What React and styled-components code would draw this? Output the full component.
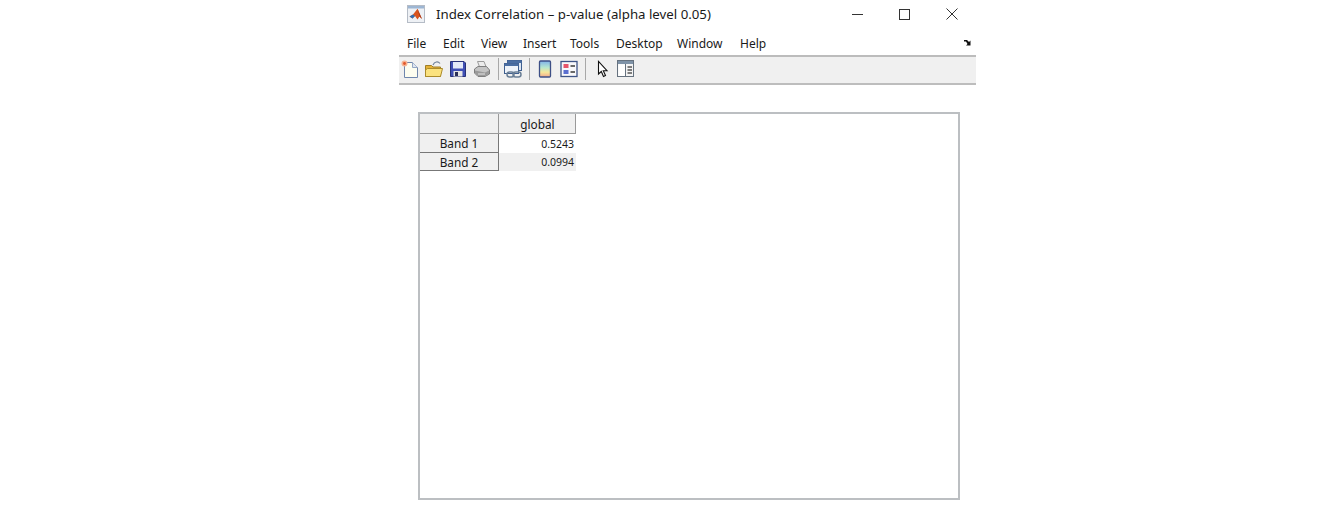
import React from 'react';
import styled, {createGlobalStyle} from 'styled-components';

const GlobalStyle = createGlobalStyle`
    html, body {
        margin: 0;
        padding: 0;
        background: #ffffff;
    }
    body {
        font-family: "Noto Sans", "Open Sans", sans-serif;
        color: #1a1a1a;
    }
`;

const Page = styled.div`
    width: 1320px;
    height: 517px;
    overflow: hidden;
    padding-left: 399px;
    box-sizing: border-box;
`;

const Win = styled.div`
    width: 577px;
`;

const TitleBar = styled.div`
    height: 28px;
    display: flex;
    align-items: center;
    padding-left: 8px;
`;

const TitleText = styled.div`
    flex: 1;
    margin-left: 11px;
    font-size: 13.25px;
    white-space: nowrap;
`;

const WinButtons = styled.div`
    display: flex;
    align-items: center;
`;

const WinButton = styled.div`
    width: 47px;
    height: 28px;
    display: flex;
    align-items: center;
    justify-content: center;
    margin-right: ${p => p.$last ? '1px' : '0'};
`;

const MenuBar = styled.div`
    height: 29px;
    display: flex;
    align-items: center;
    padding: 3px 4px 0 8px;
    border-bottom: 2px solid #bcbcbc;
    box-sizing: border-box;
    font-size: 12px;
`;

const MenuItem = styled.span`
    width: ${p => p.$w}px;
    white-space: nowrap;
`;

const ResizeArrow = styled.div`
    margin-left: auto;
    margin-top: -2px;
    display: flex;
`;

const ToolBar = styled.div`
    height: 28px;
    display: flex;
    align-items: center;
    padding-bottom: 2px;
    background: #f0f0f0;
    border-bottom: 2px solid #bdbdbd;
    box-sizing: border-box;
`;

const ToolIcon = styled.div`
    width: 22px;
    height: 24px;
    margin-right: 2px;
    display: flex;
    align-items: center;
    justify-content: center;
    flex: none;
`;

const Sep = styled.div`
    width: 1px;
    height: 22px;
    background: #a8a8a8;
    margin: 0 ${p => p.$after}px 0 3px;
`;

const Body = styled.div`
    padding: 27px 0 0 19px;
`;

const Panel = styled.div`
    width: 542px;
    height: 388px;
    border: 2px solid #bcbfc2;
    box-sizing: border-box;
`;

const Grid = styled.div`
    display: grid;
    grid-template-columns: 79px 77px;
    grid-template-rows: 20px 19px 18px;
    width: 156px;
    font-size: 11.8px;
`;

const CornerCell = styled.div`
    background: #f0f0f0;
    border-right: 1px solid #9a9a9a;
    border-bottom: 1px solid #9a9a9a;
`;

const ColHead = styled.div`
    background: #f0f0f0;
    border-right: 1px solid #9a9a9a;
    border-bottom: 1px solid #9a9a9a;
    display: flex;
    align-items: center;
    justify-content: center;
    padding: 1px 0 0 1px;
    box-sizing: border-box;
`;

const RowHead = styled.div`
    background: #f0f0f0;
    border-right: 1px solid #777777;
    border-bottom: 1px solid #777777;
    display: flex;
    align-items: center;
    justify-content: center;
    box-sizing: border-box;
`;

const DataCell = styled.div`
    background: ${p => p.$alt ? '#f0f0f0' : '#ffffff'};
    display: flex;
    align-items: center;
    justify-content: flex-end;
    padding-right: 2px;
    font-size: 10.5px;
`;

const MatlabIcon = () => (
    <svg width="18" height="18" viewBox="0 0 18 18">
        <rect x="0.5" y="0.5" width="17" height="17" fill="#eef1f5" stroke="#b5bcc6"/>
        <rect x="1" y="1" width="16" height="2.5" fill="#9db6d3"/>
        <path d="M2.5 11.5 L6 9.5 L8 7 L10.5 3.8 L15 14 L12.5 11.5 L10.5 14.5 L8 11 L5.5 13.5 Z" fill="#d9541e"/>
        <path d="M2.5 11.5 L6 9.5 L8 11 L5.5 13.5 Z" fill="#2f6fb3"/>
        <path d="M10.5 3.8 L15 14 L12.5 11.5 Z" fill="#a83a1a"/>
    </svg>
);

const NewIcon = () => (
    <svg width="18" height="19" viewBox="0 0 18 19">
        <path d="M3.5 2.5 H11.5 L16.5 7.5 V17.5 H3.5 Z" fill="#fdfdf0" stroke="#6f86ad"/>
        <path d="M11.5 2.5 V7.5 H16.5" fill="#dfe6f1" stroke="#94a7c4"/>
        <circle cx="3.5" cy="3.5" r="3" fill="#f6b391"/>
        <circle cx="3.5" cy="3.5" r="1.4" fill="#e2562a"/>
    </svg>
);

const OpenIcon = () => (
    <svg width="18" height="18" viewBox="0 0 18 18">
        <path d="M8 5 C9.5 1.5 13 1 15 3.5" fill="none" stroke="#6f8199" strokeWidth="1.2"/>
        <path d="M0.5 5.5 H6.5 L8 7 H15.5 V16.5 H0.5 Z" fill="#e4b136" stroke="#9f7e26"/>
        <path d="M0.5 16.5 V10 L2.5 8.5 H17.5 L15.5 16.5 Z" fill="#fbe27e" stroke="#ab8b2b"/>
    </svg>
);

const SaveIcon = () => (
    <svg width="18" height="18" viewBox="0 0 18 18">
        <path d="M1.5 1.5 H15 L16.5 3 V16.5 H1.5 Z" fill="#3f4fb5" stroke="#283278"/>
        <rect x="4" y="2" width="10" height="6.5" fill="#e3e9f8"/>
        <rect x="4.5" y="11" width="9" height="5.5" fill="#e5e5e5"/>
        <rect x="6" y="12" width="3" height="4" fill="#2b2f58"/>
    </svg>
);

const PrintIcon = () => (
    <svg width="18" height="18" viewBox="0 0 18 18">
        <path d="M4.5 1.5 H11 L13.5 8 H7 Z" fill="#ececec" stroke="#9a9a9a"/>
        <path d="M1.5 9 L5 6.5 H13.5 L16.5 10 V14 L12 16.5 H5 L1.5 13 Z" fill="#c4c4c4" stroke="#7e7e7e"/>
        <path d="M2 10.5 L12 12.5 L16 10.5 V14 L12 16 H5 L2 13 Z" fill="#9a9a9a"/>
        <path d="M5 14 H12" stroke="#e4e4e4"/>
    </svg>
);

const LinkIcon = () => (
    <svg width="18" height="18" viewBox="0 0 18 18">
        <rect x="3.5" y="0.5" width="14" height="10" fill="#dce6f4" stroke="#3f5f8f"/>
        <rect x="3.5" y="0.5" width="14" height="2.5" fill="#4a6ea3"/>
        <rect x="0.5" y="3.5" width="14" height="10" fill="#eef3fa" stroke="#3f5f8f"/>
        <rect x="0.5" y="3.5" width="14" height="2.5" fill="#4a6ea3"/>
        <rect x="3" y="12" width="7" height="5" rx="2.5" fill="none" stroke="#6a7f96" strokeWidth="1.5"/>
        <rect x="9" y="12" width="8" height="5" rx="2.5" fill="none" stroke="#6a7f96" strokeWidth="1.5"/>
    </svg>
);

const ColorbarIcon = () => (
    <svg width="18" height="18" viewBox="0 0 18 18">
        <defs>
            <linearGradient id="cbar" x1="0" y1="0" x2="0" y2="1">
                <stop offset="0" stopColor="#7fb2ea"/>
                <stop offset="0.4" stopColor="#b5e6cf"/>
                <stop offset="0.7" stopColor="#f7e79a"/>
                <stop offset="1" stopColor="#f2a98a"/>
            </linearGradient>
        </defs>
        <rect x="3.5" y="1" width="11" height="16" rx="1" fill="url(#cbar)" stroke="#3d4f86" strokeWidth="1.3"/>
    </svg>
);

const LegendIcon = () => (
    <svg width="18" height="18" viewBox="0 0 18 18">
        <rect x="1" y="1.5" width="16" height="15" fill="#f8f8fb" stroke="#3e5487" strokeWidth="1.3"/>
        <rect x="3.5" y="4" width="5" height="4" fill="#e8546a"/>
        <rect x="3.5" y="10" width="5" height="4" fill="#5b6fd0"/>
        <path d="M10.5 6 H15 M10.5 12 H15" stroke="#3a3a3a" strokeWidth="1.3"/>
    </svg>
);

const CursorIcon = () => (
    <svg width="18" height="18" viewBox="0 0 18 18">
        <path d="M5.5 1.5 V14 L8.3 11.5 L10.5 16.5 L12.5 15.5 L10.3 10.7 H14 Z" fill="#ffffff" stroke="#111111" strokeWidth="1.1"/>
    </svg>
);

const PaneIcon = () => (
    <svg width="18" height="18" viewBox="0 0 18 18">
        <rect x="0.5" y="0.5" width="16" height="16" fill="#f4f4f4" stroke="#66727f"/>
        <rect x="1" y="1" width="15" height="3" fill="#7f93a8"/>
        <rect x="1.5" y="4.5" width="6.5" height="11.5" fill="#ffffff"/>
        <path d="M8.5 4 V16" stroke="#66727f"/>
        <path d="M10.5 7 H15 M10.5 10 H15 M10.5 13 H15" stroke="#555555" strokeWidth="1.3"/>
    </svg>
);

const rows = [
    {name: 'Band 1', value: '0.5243'},
    {name: 'Band 2', value: '0.0994'}
];

const menus = [
    {label: 'File', w: 36},
    {label: 'Edit', w: 38},
    {label: 'View', w: 42},
    {label: 'Insert', w: 47},
    {label: 'Tools', w: 46},
    {label: 'Desktop', w: 61},
    {label: 'Window', w: 63},
    {label: 'Help', w: 30}
];

const App = () => (
    <Page>
        <GlobalStyle />
        <Win>
            <TitleBar>
                <MatlabIcon />
                <TitleText>Index Correlation – p-value (alpha level 0.05)</TitleText>
                <WinButtons>
                    <WinButton>
                        <svg width="11" height="11" viewBox="0 0 11 11"><path d="M0 5.5 H11" stroke="#333" strokeWidth="1"/></svg>
                    </WinButton>
                    <WinButton>
                        <svg width="11" height="11" viewBox="0 0 11 11"><rect x="0.5" y="0.5" width="10" height="10" fill="none" stroke="#333"/></svg>
                    </WinButton>
                    <WinButton $last>
                        <svg width="12" height="12" viewBox="0 0 12 12"><path d="M0.5 0.5 L11.5 11.5 M11.5 0.5 L0.5 11.5" stroke="#333" strokeWidth="1"/></svg>
                    </WinButton>
                </WinButtons>
            </TitleBar>
            <MenuBar>
                {menus.map(m => <MenuItem key={m.label} $w={m.w}>{m.label}</MenuItem>)}
                <ResizeArrow>
                    <svg width="8" height="7" viewBox="0 0 8 7"><path d="M0 1 H3 L5 3 L6.5 1.5 V6.5 H2 L3.5 5 L2 2.5 H0 Z" fill="#111"/></svg>
                </ResizeArrow>
            </MenuBar>
            <ToolBar>
                <ToolIcon><NewIcon /></ToolIcon>
                <ToolIcon><OpenIcon /></ToolIcon>
                <ToolIcon><SaveIcon /></ToolIcon>
                <ToolIcon><PrintIcon /></ToolIcon>
                <Sep $after={3} />
                <ToolIcon><LinkIcon /></ToolIcon>
                <Sep $after={4} />
                <ToolIcon><ColorbarIcon /></ToolIcon>
                <ToolIcon><LegendIcon /></ToolIcon>
                <Sep $after={5} />
                <ToolIcon><CursorIcon /></ToolIcon>
                <ToolIcon><PaneIcon /></ToolIcon>
            </ToolBar>
            <Body>
                <Panel>
                    <Grid>
                        <CornerCell />
                        <ColHead>global</ColHead>
                        {rows.map((r, i) => (
                            <React.Fragment key={r.name}>
                                <RowHead>{r.name}</RowHead>
                                <DataCell $alt={i % 2 === 1}>{r.value}</DataCell>
                            </React.Fragment>
                        ))}
                    </Grid>
                </Panel>
            </Body>
        </Win>
    </Page>
);

export default App;
